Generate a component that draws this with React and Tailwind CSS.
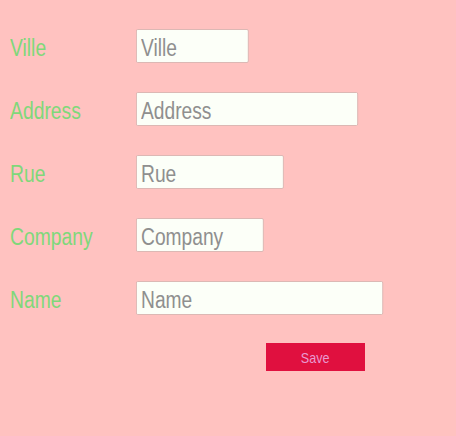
const fields = [
  { label: 'Ville', width: 'w-[135px]' },
  { label: 'Address', width: 'w-[266px]' },
  { label: 'Rue', width: 'w-[177px]' },
  { label: 'Company', width: 'w-[153px]' },
  { label: 'Name', width: 'w-[296px]' },
]

export default function App() {
  return (
    <div className="min-h-screen bg-[#ffc2c0] pt-[29px] pl-[10px] font-['Liberation_Sans',Arial,sans-serif]">
      {fields.map((f) => (
        <div key={f.label} className="flex items-end h-[34px] mb-[29px]">
          <label className="w-[126px] shrink-0 text-[23px] leading-[26px] text-[#7fd87a] mb-[2px]">
            <span className="inline-block scale-x-[0.84] origin-left">{f.label}</span>
          </label>
          <input
            placeholder={f.label}
            className={`${f.width} shrink-0 h-[34px] scale-x-[0.835] origin-left bg-[#fcfff8] border border-[#d9b3b0] rounded-[2px] pl-[5px] pt-[5px] text-[23px] placeholder:text-[#8f8f8f] outline-none`}
          />
        </div>
      ))}
      <div className="pl-[256px] -mt-[1px]">
        <button className="w-[99px] h-[28px] bg-[#e0103f] text-[#e99ad0] text-[15px] pt-[2px]">
          <span className="inline-block scale-x-[0.84]">Save</span>
        </button>
      </div>
    </div>
  )
}
